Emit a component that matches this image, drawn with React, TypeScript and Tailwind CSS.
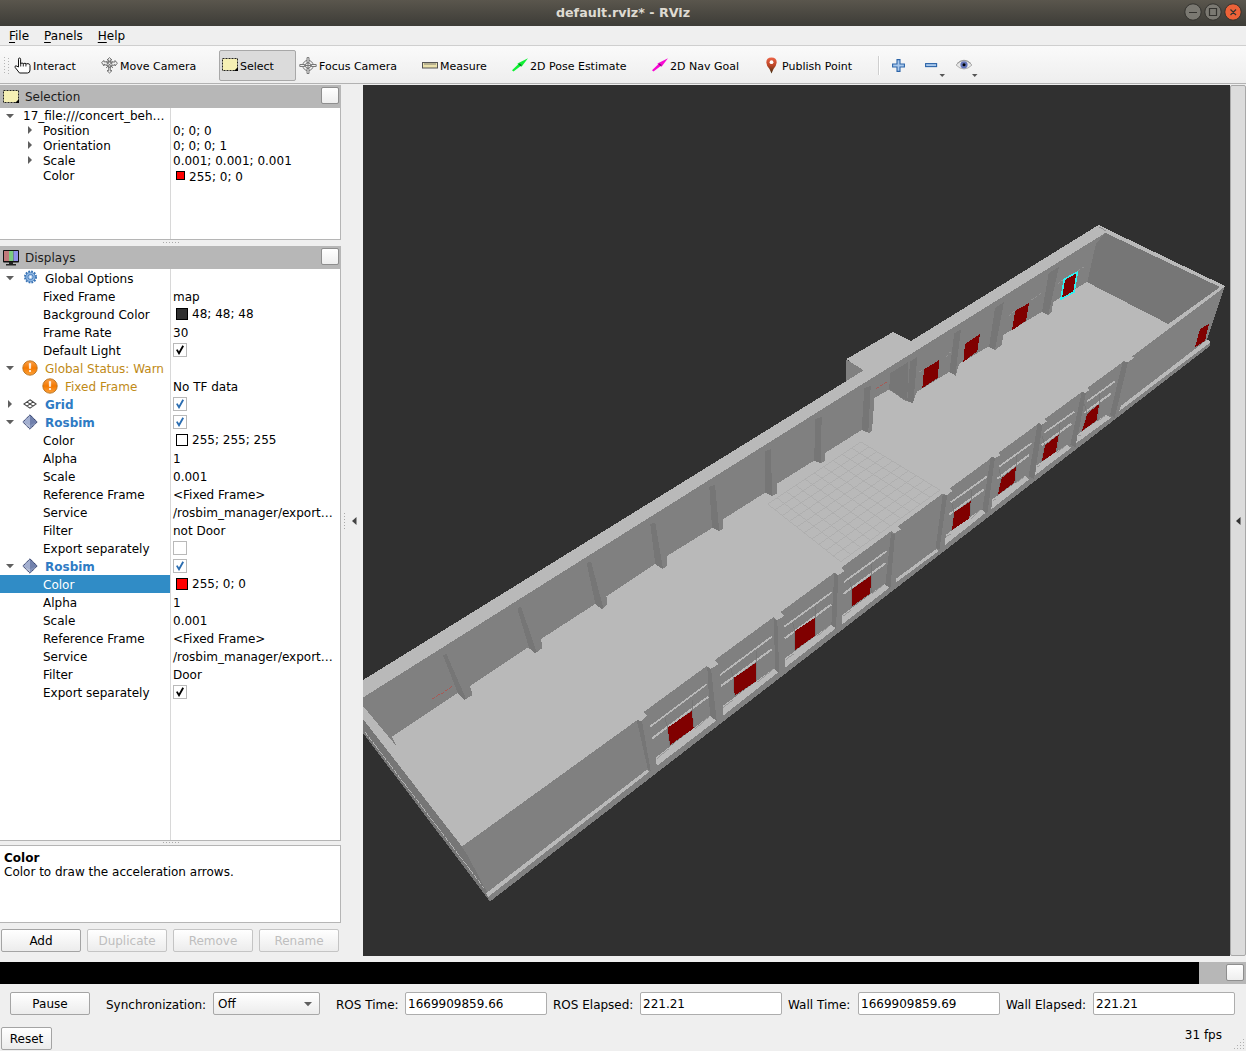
import React from "react";

type Pt = [number, number];

/* ---------- small widgets ---------- */

function Arrow({ dir }: { dir: "down" | "right" | "none" }) {
  if (dir === "none") return null;
  return (
    <svg className="block" width="8" height="8" viewBox="0 0 8 8">
      {dir === "down" ? <path d="M0 2h8L4 6.2z" fill="#5f5f5f" /> : <path d="M2 0v8l4-4z" fill="#5f5f5f" />}
    </svg>
  );
}

function SelectIcon() {
  return (
    <svg className="block shrink-0" width="16" height="16" viewBox="0 0 16 16">
      <rect x=".5" y="1.500" width="15" height="12" fill="#f6f0b4" />
      <rect x=".5" y="1.500" width="15" height="12" fill="none" stroke="#222" strokeDasharray="2 1" />
      <path d="M16 10v4h-4z" fill="#000" />
    </svg>
  );
}

function MonitorIcon() {
  return (
    <svg className="mt-px block shrink-0" width="16" height="17" viewBox="0 0 16 17">
      <rect width="16" height="12.5" rx=".8" fill="#111" />
      <rect x="1" y="1" width="5" height="10" fill="#c07a7a" />
      <rect x="6" y="1" width="4.5" height="10" fill="#7ccb80" />
      <rect x="10.500" y="1" width="4.500" height="10" fill="#9090ea" />
      <path d="M6 12h4v2h3v1.500H3V14h3z" fill="#222" />
    </svg>
  );
}

function GearIcon() {
  return (
    <svg className="block" width="15" height="15" viewBox="0 0 15 15">
      <circle cx="7.500" cy="7" r="5.500" fill="none" stroke="#3570b3" strokeWidth="2" strokeDasharray="1.700 1.180" />
      <circle cx="7.500" cy="7" r="4.800" fill="#8fb6e2" stroke="#3f78b8" strokeWidth=".8" />
      <circle cx="7.500" cy="7" r="2.600" fill="#b8d2f0" stroke="#3570b3" strokeWidth=".8" />
      <circle cx="7.500" cy="7" r="1" fill="#fff" />
    </svg>
  );
}

function WarnIcon() {
  return (
    <svg className="block" width="16" height="16" viewBox="0 0 16 16">
      <defs>
        <linearGradient id="wg" x1="0" y1="0" x2="0" y2="1">
          <stop offset="0" stopColor="#f9a04a" />
          <stop offset=".5" stopColor="#f57900" />
          <stop offset="1" stopColor="#fda23a" />
        </linearGradient>
      </defs>
      <circle cx="8" cy="8" r="7.200" fill="url(#wg)" stroke="#b8701c" strokeWidth=".9" />
      <path d="M7.200 3.500h1.600L8.600 8.500H7.400z" fill="#fff" stroke="#fff" strokeWidth=".5" />
      <circle cx="8" cy="11" r="1.100" fill="#fff" />
    </svg>
  );
}

function GridIcon() {
  return (
    <svg className="block" width="14" height="10" viewBox="0 0 14 10">
      <path d="M7 .8 13.200 5 7 9.200.8 5zM3.900 2.900l6.200 4.200M10.100 2.900 3.900 7.100" fill="none" stroke="#444" strokeWidth="1.100" />
    </svg>
  );
}

function RosbimIcon() {
  return (
    <svg className="block" width="16" height="16" viewBox="0 0 16 16">
      <path d="M8 .8 15.200 8 8 15.200.8 8z" fill="#8090b8" />
      <path d="M8 .8.8 8 8 11z" fill="#a3afd0" />
      <path d="M8 .8 15.200 8 8 11z" fill="#7080ac" />
      <path d="M.8 8 8 15.200V11z" fill="#b4bdd6" />
      <path d="M8 .8 15.200 8 8 15.200.8 8z" fill="none" stroke="#25305a" strokeDasharray="1.300 .7" />
    </svg>
  );
}

function Check({ on, blue }: { on: boolean; blue?: boolean }) {
  return (
    <span className="flex h-[14px] w-[14px] items-center justify-center border border-[#b9b9b9] bg-white">
      {on && (
        <svg width="10" height="10" viewBox="0 0 10 10">
          <path d="M1.800 4.600 4 8.300 8.200.8" fill="none" stroke={blue ? "#2a6cb0" : "#000"} strokeWidth="1.800" />
        </svg>
      )}
    </span>
  );
}

function Swatch({ color, size }: { color: string; size: "sm" | "md" }) {
  return (
    <span
      className={size === "sm" ? "ml-[3px] h-[9px] w-[9px] border border-black" : "ml-[3px] h-3 w-3 border border-black"}
      style={{ backgroundColor: color }}
    />
  );
}

function PushButton({ label, className, disabled }: { label: string; className: string; disabled?: boolean }) {
  return (
    <button
      className={
        "flex h-[23px] items-center justify-center rounded-[2px] border bg-linear-to-b from-white to-[#ececec] leading-none " +
        (disabled ? "border-[#c4c4c4] text-[#bebebe] " : "border-[#a4a4a4] text-black ") +
        className
      }
    >
      {label}
    </button>
  );
}

function FloatButton() {
  return <span className="h-[17px] w-[18px] rounded-[2px] border border-[#8e8e8e] bg-linear-to-b from-white to-[#eee]" />;
}

function PanelHeader({ icon, title }: { icon: React.ReactNode; title: string }) {
  return (
    <div className="flex h-[23px] w-[341px] shrink-0 items-center bg-[#b7b7b7] pr-[2px] pl-[3px]">
      {icon}
      <span className="ml-1.5 flex-1 pt-px text-[#1c1c1c]">{title}</span>
      <span className="-mt-[2px] flex">
        <FloatButton />
      </span>
    </div>
  );
}

function Handle({ className }: { className: string }) {
  return (
    <div className={"flex shrink-0 justify-center " + className}>
      <span className="h-px w-4 bg-[repeating-linear-gradient(90deg,#aaa_0_1px,transparent_1px_3px)]" />
    </div>
  );
}

/* ---------- trees ---------- */

type Row = {
  arrow?: "down" | "right";
  icon?: React.ReactNode;
  label: string;
  indent: 0 | 1 | 2;
  tone?: "bold" | "warn" | "selected";
  value?: React.ReactNode;
};

const text = (s: string) => <span className="pt-[2px]">{s}</span>;
const colour = (c: string, s: string) => (
  <>
    <Swatch color={c} size="md" />
    <span className="-mt-px ml-1">{s}</span>
  </>
);

const displayRows: Row[] = [
  { arrow: "down", icon: <GearIcon />, label: "Global Options", indent: 0 },
  { label: "Fixed Frame", indent: 1, value: text("map") },
  { label: "Background Color", indent: 1, value: colour("#303030", "48; 48; 48") },
  { label: "Frame Rate", indent: 1, value: text("30") },
  { label: "Default Light", indent: 1, value: <Check on /> },
  { arrow: "down", icon: <WarnIcon />, label: "Global Status: Warn", indent: 0, tone: "warn" },
  { icon: <WarnIcon />, label: "Fixed Frame", indent: 2, tone: "warn", value: text("No TF data") },
  { arrow: "right", icon: <GridIcon />, label: "Grid", indent: 0, tone: "bold", value: <Check on blue /> },
  { arrow: "down", icon: <RosbimIcon />, label: "Rosbim", indent: 0, tone: "bold", value: <Check on blue /> },
  { label: "Color", indent: 1, value: colour("#ffffff", "255; 255; 255") },
  { label: "Alpha", indent: 1, value: text("1") },
  { label: "Scale", indent: 1, value: text("0.001") },
  { label: "Reference Frame", indent: 1, value: text("<Fixed Frame>") },
  { label: "Service", indent: 1, value: text("/rosbim_manager/export…") },
  { label: "Filter", indent: 1, value: text("not Door") },
  { label: "Export separately", indent: 1, value: <Check on={false} /> },
  { arrow: "down", icon: <RosbimIcon />, label: "Rosbim", indent: 0, tone: "bold", value: <Check on blue /> },
  { label: "Color", indent: 1, tone: "selected", value: colour("#ff0000", "255; 0; 0") },
  { label: "Alpha", indent: 1, value: text("1") },
  { label: "Scale", indent: 1, value: text("0.001") },
  { label: "Reference Frame", indent: 1, value: text("<Fixed Frame>") },
  { label: "Service", indent: 1, value: text("/rosbim_manager/export…") },
  { label: "Filter", indent: 1, value: text("Door") },
  { label: "Export separately", indent: 1, value: <Check on /> },
];

const tones = {
  bold: "font-bold text-[#2f7bc4]",
  warn: "text-[#c08a16]",
  selected: "text-white",
};

function DisplayRow({ row }: { row: Row }) {
  return (
    <div className="flex h-[18px]">
      <div className={"flex w-[170px] shrink-0 items-center " + (row.tone === "selected" ? "bg-[#308cc6]" : "")}>
        {row.indent === 0 && (
          <span className="ml-1.5 w-2">
            <Arrow dir={row.arrow ?? "none"} />
          </span>
        )}
        {row.icon ? (
          <span className={"flex justify-start " + (row.indent === 2 ? "ml-[42px] w-[23px]" : "w-[31px]")}>
            <span className={"-mt-px flex justify-center " + (row.indent === 2 ? "w-4" : "ml-2 w-4")}>{row.icon}</span>
          </span>
        ) : (
          <span className="w-[43px]" />
        )}
        <span className={"pt-[2px] whitespace-nowrap " + (row.tone ? tones[row.tone] : "")}>{row.label}</span>
      </div>
      <div className="flex flex-1 items-center border-l border-[#d8d8d8] pl-[2px] whitespace-nowrap">{row.value}</div>
    </div>
  );
}

const selectionRows: { arrow: boolean; label: string; value: React.ReactNode }[] = [
  { arrow: true, label: "Position", value: text("0; 0; 0") },
  { arrow: true, label: "Orientation", value: text("0; 0; 0; 1") },
  { arrow: true, label: "Scale", value: text("0.001; 0.001; 0.001") },
  {
    arrow: false,
    label: "Color",
    value: (
      <>
        <Swatch color="#ff0000" size="sm" />
        <span className="mt-1 ml-1">255; 0; 0</span>
      </>
    ),
  },
];

/* ---------- toolbar ---------- */

const handIcon = (
  <svg className="-ml-px block" width="17" height="17" viewBox="0 0 17 17">
    <path
      d="M4.500 10V2.200Q4.500 1 5.500 1T6.600 2.200V6.500L8 6l1.500.6L11 6.200l1.500.7 1.500-.3Q16 7 16 8.500V13Q16 16 13.500 16H5.500L1.200 10.500Q.5 8.800 2 8.800z"
      fill="#fff"
      stroke="#111"
      strokeWidth="1"
    />
    <path d="M6.700 6v3.500M9.300 6.500v3M11.900 6.800v2.700" stroke="#111" strokeWidth=".9" />
  </svg>
);
const moveIcon = (
  <svg className="-ml-px block" width="17" height="17" viewBox="0 0 17 17">
    <g fill="#eee" stroke="#666" strokeWidth=".9">
      <path d="M8.500.6 11 3H9.300v3.500H7.700V3H6zM8.500 16 6 13.600h1.700V10h1.600v3.600H11z" />
      <path d="M.6 5.500 3 3.500v1.300l11 .2V3.500l2.400 2.700L14 9V7.500L9 10 3 7.200V9z" />
      <circle cx="8.500" cy="7.500" r="2.500" />
      <path d="M5 4.500l7 6.500M12 4.500 5 11" />
    </g>
  </svg>
);
const focusIcon = (
  <svg className="block" width="18" height="17" viewBox="0 0 18 17">
    <g fill="none" stroke="#777" strokeWidth="1">
      <circle cx="9" cy="8.500" r="5.200" fill="#f4f4f4" />
      <circle cx="9" cy="8.500" r="2.700" />
      <path d="M8 .6h2v5H8zM8 11.500h2v5H8zM.8 7.500h5v2h-5zM12.200 7.500h5v2h-5z" fill="#eee" />
      <path d="M9 5v7M5.500 8.500h7" />
    </g>
  </svg>
);
const measureIcon = (
  <svg className="block" width="16" height="7" viewBox="0 0 16 7">
    <rect x=".5" y=".5" width="15" height="5.500" fill="#ebe2ac" stroke="#555" />
    <path d="M3 1v2M5 1v2M7 1v2M9 1v2M11 1v2M13 1v2" stroke="#666" strokeWidth=".8" />
  </svg>
);
const arrowIcon = (fill: string, mid: string) => (
  <svg className="block" width="16" height="14" viewBox="0 0 16 14">
    <path d="M0 12.200 6 6.500 5.500 5.500 16 .3 9.500 8.800 8.700 8 1.500 13.500z" fill={fill} />
    <path d="m7 6 2.300 1.700" stroke={mid} strokeWidth="1.500" />
  </svg>
);
const pinIcon = (
  <svg className="block" width="11" height="17" viewBox="0 0 11 17">
    <defs>
      <linearGradient id="pin" x1="0" y1="0" x2="0" y2="1">
        <stop offset="0" stopColor="#ec6447" />
        <stop offset=".5" stopColor="#bb4526" />
        <stop offset="1" stopColor="#3f2d10" />
      </linearGradient>
    </defs>
    <path d="M5.500.5Q10.700.5 10.700 5.500 10.500 8.500 7.500 12L5.500 16.500 3.500 12Q.4 8.500.3 5.500.3.5 5.500.5z" fill="url(#pin)" />
    <circle cx="5.500" cy="5.200" r="1.900" fill="#fff" />
  </svg>
);

const tools: { label: string; icon: React.ReactNode; box: string; iconBox: string; active?: boolean }[] = [
  { label: "Interact", icon: handIcon, box: "w-[87px]", iconBox: "w-[18px]" },
  { label: "Move Camera", icon: moveIcon, box: "w-[117px]", iconBox: "w-[18px]" },
  { label: "Select", icon: <SelectIcon />, box: "w-[77px]", iconBox: "w-[18px]", active: true },
  { label: "Focus Camera", icon: focusIcon, box: "w-[126px] pl-[3px]", iconBox: "w-[20px]" },
  { label: "Measure", icon: measureIcon, box: "w-[90px]", iconBox: "w-[18px]" },
  { label: "2D Pose Estimate", icon: arrowIcon("#0ff034", "#0a7020"), box: "w-[140px]", iconBox: "w-[18px]" },
  { label: "2D Nav Goal", icon: arrowIcon("#f808d4", "#80107a"), box: "w-[114px]", iconBox: "w-[18px]" },
  { label: "Publish Point", icon: pinIcon, box: "w-[112px]", iconBox: "w-[16px]" },
];

function Toolbar() {
  return (
    <div className="flex h-[39px] shrink-0 items-center border-b border-b-[#b2b2b2] border-t border-t-[#cfcfcf] bg-linear-to-b from-[#fafafa] to-[#eee] pt-px text-[11px]">
      <div className="ml-1 grid grid-cols-2 gap-x-[3px] gap-y-px">
        {Array.from({ length: 12 }, (_, i) => (
          <span key={i} className={"h-px w-px bg-[#b5b5b5] " + (i % 2 ? "mt-px" : "")} />
        ))}
      </div>
      <div className="ml-[6px] flex pt-px">
        {tools.map((t) => (
          <div
            key={t.label}
            className={
              "flex h-[31px] shrink-0 items-center pb-px " +
              (t.active ? "rounded-[2px] border border-[#a8a8a8] bg-[#dbdbdb] pl-[2px] " : "") +
              t.box
            }
          >
            <span className={"flex shrink-0 " + t.iconBox}>{t.icon}</span>
            <span className="pt-[3px] whitespace-nowrap">{t.label}</span>
          </div>
        ))}
      </div>
      <div className="h-[19px] w-[2px] border-r border-r-white bg-[#cfcfcf]" />
      <svg className="ml-[12px] block" width="13" height="13" viewBox="0 0 13 13">
        <path d="M5 .6h3V5h4.400v3H8v4.400H5V8H.6V5H5z" fill="#a9c8ec" stroke="#2c64a8" strokeWidth="1.100" />
      </svg>
      <svg className="mt-[9px] ml-[20px] block" width="21" height="22" viewBox="0 0 21 22">
        <rect x=".6" y="4.600" width="11" height="3" fill="#a9c8ec" stroke="#2c64a8" strokeWidth="1.100" />
        <path d="M14.500 15h5.500L17.200 18z" fill="#555" />
      </svg>
      <svg className="mt-[9px] ml-[10px] block" width="24" height="22" viewBox="0 0 24 22">
        <path d="M0 6Q8 -3 16 6 8 14 0 6z" fill="#e8e8e8" stroke="#a9a9a9" strokeWidth=".9" />
        <path d="M1 4.500Q8-2 15 4.500" stroke="#999" fill="none" />
        <circle cx="8" cy="5.800" r="3.600" fill="#6273b8" />
        <circle cx="8" cy="5.800" r="1.500" fill="#000" />
        <path d="M16 15h5.500L18.700 18z" fill="#555" />
      </svg>
    </div>
  );
}

/* ---------- 3D view ---------- */

const LIGHT = "#b9b9b9";
const MID = "#808080";
const DARK = "#767676";
const RED = "#800000";

/* Converts points measured on a 3x scale around an origin to view units. */
const at = (ox: number, oy: number, pts: number[]) => {
  const out: string[] = [];
  for (let i = 0; i < pts.length; i += 2) out.push(`${(ox + pts[i] / 3).toFixed(1)},${(oy + pts[i + 1] / 3).toFixed(1)}`);
  return out.join(" ");
};

type Bay = { o: Pt; upper: number[]; lower: number[]; door: number[]; ledge: number[] };

const L: Pt = [620, 520];
const R: Pt = [900, 320];
const bays: Bay[] = [
  { o: L, upper: [90, 620, 260, 493], lower: [97, 655, 265, 530], door: [143, 623, 215, 573, 221, 625, 150, 675], ledge: [108, 712, 270, 587, 288, 602, 110, 738] },
  { o: L, upper: [300, 465, 455, 350], lower: [303, 498, 455, 388], door: [341, 474, 408, 428, 408, 484, 344, 527], ledge: [308, 558, 462, 445, 473, 458, 309, 587] },
  { o: L, upper: [493, 320, 635, 217], lower: [495, 355, 633, 254], door: [525, 333, 586, 292, 586, 347, 525, 390], ledge: [495, 415, 632, 314, 647, 325, 495, 443] },
  { o: L, upper: [672, 186, 800, 93], lower: [670, 222, 797, 129], door: [696, 207, 753, 167, 751, 220, 696, 259], ledge: [667, 285, 793, 192, 808, 203, 667, 313] },
  { o: R, upper: [152, 547, 260, 470], lower: [147, 584, 252, 508], door: [163, 577, 212, 543, 208, 595, 156, 630], ledge: [137, 645, 243, 568, 257, 578, 135, 675] },
  { o: R, upper: [297, 440, 395, 369], lower: [292, 476, 387, 405], door: [305, 474, 348, 440, 343, 488, 293, 525], ledge: [277, 538, 375, 468, 388, 478, 274, 568] },
  { o: R, upper: [433, 338, 523, 275], lower: [425, 376, 514, 311], door: [435, 376, 476, 344, 468, 395, 425, 425], ledge: [408, 437, 500, 374, 514, 383, 406, 465] },
  { o: R, upper: [562, 244, 645, 184], lower: [553, 279, 634, 220], door: [562, 281, 598, 252, 589, 302, 546, 333], ledge: [533, 343, 618, 284, 633, 293, 528, 370] },
];

const frontColumns: [Pt, number[]][] = [
  [L, [50, 600, 66, 603, 92, 752, 84, 750]],
  [L, [262, 442, 273, 445, 290, 603, 270, 588]],
  [L, [463, 298, 472, 300, 478, 461, 464, 446]],
  [L, [643, 160, 655, 163, 648, 327, 634, 316]],
  [L, [813, 40, 825, 42, 811, 208, 796, 194]],
  [R, [128, 525, 142, 524, 118, 690, 107, 683]],
  [R, [272, 412, 285, 412, 262, 582, 247, 570]],
  [R, [413, 310, 428, 312, 402, 478, 386, 468]],
  [R, [545, 217, 558, 217, 527, 382, 511, 374]],
  [R, [668, 125, 684, 127, 644, 293, 630, 284]],
];

const caps: [Pt, number[]][] = [
  [L, [50, 598, 68, 573, 82, 586, 62, 604]],
  [L, [258, 437, 282, 420, 295, 433, 272, 447]],
  [L, [460, 291, 480, 275, 492, 288, 471, 301]],
  [L, [643, 155, 662, 143, 673, 153, 653, 167]],
  [L, [812, 30, 830, 18, 843, 28, 823, 40]],
  [R, [128, 520, 145, 502, 157, 513, 140, 526]],
  [R, [272, 408, 290, 395, 302, 405, 285, 415]],
  [R, [413, 307, 430, 295, 442, 304, 425, 314]],
  [R, [543, 213, 558, 200, 570, 210, 555, 219]],
  [R, [668, 122, 688, 105, 703, 113, 684, 127]],
];

const backColumns: [Pt, number[]][] = [
  [[360, 580], [249, 226, 259, 221, 318, 356, 312, 360, 295, 343]],
  [[360, 580], [472, 86, 483, 80, 530, 216, 524, 219, 507, 203]],
  [[360, 580], [680, -50, 693, -56, 730, 84, 724, 87, 706, 71]],
  [[600, 380], [151, 433, 166, 427, 189, 566, 166, 553]],
  [[600, 380], [328, 320, 345, 314, 358, 453, 336, 443]],
  [[600, 380], [495, 213, 513, 207, 516, 348, 496, 338]],
  [[600, 380], [645, 118, 665, 110, 662, 250, 643, 242]],
  [[600, 380], [793, 25, 812, 18, 805, 157, 785, 150]],
  [[840, 210], [150, 490, 205, 456, 202, 570, 192, 568, 148, 537]],
  [[840, 210], [210, 455, 232, 440, 220, 580, 202, 572]],
  [[840, 210], [343, 370, 363, 358, 346, 496, 328, 487]],
  [[840, 210], [465, 295, 492, 275, 465, 419, 447, 411]],
  [[840, 210], [626, 190, 657, 170, 625, 314, 606, 306]],
];

const gridCorners: Pt[] = [
  [767.7, 504],
  [861, 442],
  [940, 490],
  [840.7, 561.7],
];

function lerp(a: Pt, b: Pt, t: number): Pt {
  return [a[0] + (b[0] - a[0]) * t, a[1] + (b[1] - a[1]) * t];
}

function FloorGrid() {
  const [a, b, c, d] = gridCorners;
  const lines: [Pt, Pt][] = [];
  for (let i = 0; i <= 10; i++) {
    const t = i / 10;
    lines.push([lerp(a, b, t), lerp(d, c, t)]);
    lines.push([lerp(a, d, t), lerp(b, c, t)]);
  }
  return (
    <g stroke="#acacac" strokeWidth=".8">
      {lines.map(([p, q], i) => (
        <line key={i} x1={p[0]} y1={p[1]} x2={q[0]} y2={q[1]} />
      ))}
    </g>
  );
}

function Scene() {
  return (
    <svg className="block h-[871px] w-[867px] shrink-0 bg-[#303030]" viewBox="363 85 867 871" shapeRendering="crispEdges">
      {/* annex */}
      <polygon points="893,332 912,341.500 863,371 846.500,359" fill={LIGHT} />
      <polygon points="846.500,359.500 864,370.500 846,382" fill={MID} />
      {/* floor and wall tops */}
      <polygon points="363,680 1098.500,225 1225,286 1222,290 1140,360 650,725 463,850 363,720" fill={LIGHT} />
      <path d="M1099 227 1106 231" stroke={MID} strokeWidth=".7" />
      {/* back wall, inner side */}
      <polygon
        fill={MID}
        points="363,697.500 600,548.500 840,398 1105.700,232.700 1110,240 1087,282 1053,302 1052,311 1048,315 1041.700,312 1003,335 1002,345 995,350 988,346.700 959,364 955.700,375.700 949,372 916.700,392 912.700,403 904,400 889,389.500 874.500,398 872,430.500 869,433 861.700,430 825.500,452.700 825,461 821,463 814,460.700 776.700,484 776.500,494 772,496 765,492.700 723.500,519 723,529 719,531 712.700,527.700 667,556 667,566 662.500,569 655,564 606.500,596.500 607,604 602,609 596,603.500 541,639 542.500,648 535.500,653 528,647.500 470,686 472.500,695 464.500,700 457.700,693 392,736.700 396,745.500 363,706"
      />
      {backColumns.map(([o, p], i) => (
        <polygon key={i} points={at(o[0], o[1], p)} fill={DARK} />
      ))}
      {/* end wall */}
      <polygon points={at(840, 210, [797, 69, 1140, 231, 985, 342, 742, 217, 768, 100])} fill={DARK} />
      {/* doors in the back wall */}
      <g fill={RED}>
        <polygon points={at(840, 210, [252, 478, 298, 450, 293, 503, 247, 535])} />
        <polygon points={at(840, 210, [375, 402, 420, 372, 412, 424, 370, 456])} />
        <polygon points={at(840, 210, [526, 302, 567, 279, 558, 332, 516, 361])} />
        <polygon points={at(840, 210, [673, 208, 712, 186, 702, 246, 663, 267])} stroke="#2ff0f0" strokeWidth="1.600" />
      </g>
      <g stroke="#999" strokeWidth=".8" strokeDasharray="3 1.500">
        <path d="M945.500 356l5-4M919 372l4-2.500M1008.500 315l6-4M1031 300l10-6.500M1057.500 283l5-3M1078 271l6-4" />
      </g>
      <g stroke="#b0504a" strokeWidth=".8" strokeDasharray="4 1">
        <path d="M432 699l21-13M876 389l10.500-7" />
      </g>
      <FloorGrid />
      {/* left end wall, outer side */}
      <polygon points="363,719 462,846.500 488,894 490,901.500 363,733" fill={DARK} />
      <path d="M365 732 484 888" stroke="#c4c4c4" strokeWidth=".8" strokeDasharray="5 1" />
      {/* front wall, outer side */}
      <polygon points="461.700,846.700 638,719.500 641,714 1131,356 1134,355 1224.500,287 1207,340 1210.500,341 1210,346 490,901.500 487,893" fill={MID} />
      <polygon points="461.700,846.700 468,856 489,896 486.500,893" fill={DARK} />
      <polygon points={at(360, 580, [378, 940, 862, 568, 868, 575, 385, 950])} fill={LIGHT} />
      <polygon points={at(600, 380, [887, 597, 1010, 506, 1016, 513, 887, 608])} fill={LIGHT} />
      <polygon points={at(900, 320, [662, 258, 920, 60, 930, 62, 930, 68, 658, 273])} fill={LIGHT} />
      {frontColumns.map(([o, p], i) => (
        <polygon key={i} points={at(o[0], o[1], p)} fill={DARK} />
      ))}
      {caps.map(([o, p], i) => (
        <polygon key={i} points={at(o[0], o[1], p)} fill={LIGHT} />
      ))}
      {bays.map((b, i) => {
        const [ox, oy] = b.o;
        const d = b.door;
        const e = b.ledge;
        return (
          <g key={i}>
            <polyline points={at(ox, oy, b.upper)} stroke={LIGHT} strokeWidth="1.700" fill="none" />
            <polyline points={at(ox, oy, b.lower)} stroke={LIGHT} strokeWidth="2" fill="none" />
            <polyline points={at(ox, oy, [d[0] - 8, d[1] - 28, d[0] - 1, d[1], d[6] - 1, d[7] + 4])} stroke="#747474" strokeWidth=".8" fill="none" />
            <polyline points={at(ox, oy, [d[2] + 1, d[3] - 34, d[2] + 1, d[3], d[4] + 2, d[5] + 4])} stroke="#747474" strokeWidth=".8" fill="none" />
            <polygon points={at(ox, oy, e)} fill={LIGHT} />
            <polyline points={at(ox, oy, [d[4] + 4, d[5] + 2, e[2] - 4, e[3] + 4])} stroke="#8c8c8c" strokeWidth=".7" fill="none" />
            <polyline points={at(ox, oy, [e[0] + 2, e[1] + 4, d[6] - 4, d[7] + 12])} stroke="#8c8c8c" strokeWidth=".7" fill="none" />
            <polygon points={at(ox, oy, d)} fill={RED} />
          </g>
        );
      })}
      <polygon points={at(840, 210, [1080, 357, 1107, 341, 1095, 392, 1065, 412])} fill={RED} />
    </svg>
  );
}

/* ---------- page ---------- */

function TimeField({ label, value, labelBox }: { label: string; value: string; labelBox: string }) {
  return (
    <>
      <span className={"shrink-0 pt-[2px] whitespace-nowrap " + labelBox}>{label}</span>
      <span className="flex h-[23px] w-[142px] shrink-0 items-center rounded-[2px] border border-[#adadad] bg-white pl-[2px] leading-none">{value}</span>
    </>
  );
}

export default function App() {
  return (
    <div className="flex h-[1051px] w-[1246px] flex-col overflow-hidden bg-[#efefef] font-['DejaVu_Sans',sans-serif] text-[12px] leading-[14px] text-black">
      <div className="relative flex h-[26px] shrink-0 items-center justify-center bg-linear-to-b from-[#5a564d] to-[#3d3c37]">
        <span className="pb-px text-[12.700px] font-bold text-[#dfdbd2]">default.rviz* - RViz</span>
        <svg className="absolute top-[3px] right-[2px]" width="60" height="18" viewBox="0 0 60 18">
          <g stroke="#33322e">
            <circle cx="9" cy="9" r="8.200" fill="#7b7972" />
            <circle cx="29" cy="9" r="8.200" fill="#7b7972" />
            <circle cx="49" cy="9" r="8.200" fill="#ed6238" />
          </g>
          <path d="M5 9.500h8M25.500 5.500h7v7h-7zM46.500 6.500l5.500 5.500M52 6.500l-5.500 5.500" fill="none" stroke="#34332f" strokeWidth="1.200" />
        </svg>
      </div>

      <div className="flex h-[19px] shrink-0 items-center gap-[15px] pl-[9px]">
        {["File", "Panels", "Help"].map((m) => (
          <span key={m}>
            <span className="underline underline-offset-2">{m[0]}</span>
            {m.slice(1)}
          </span>
        ))}
      </div>

      <Toolbar />

      <div className="flex h-[878px] shrink-0 pt-px">
        <div className="flex w-[341px] shrink-0 flex-col">
          <PanelHeader icon={<SelectIcon />} title="Selection" />
          <div className="flex h-[132px] shrink-0 flex-col border-r border-b border-[#b5b5b5] bg-white leading-[15px]">
            <div className="flex h-[15px]">
              <div className="flex w-[170px] items-center">
                <span className="ml-1.5 w-[17px]">
                  <Arrow dir="down" />
                </span>
                <span className="pt-[2px] whitespace-nowrap">17_file:///concert_beh…</span>
              </div>
              <div className="flex-1 border-l border-[#d8d8d8]" />
            </div>
            {selectionRows.map((r) => (
              <div key={r.label} className="flex h-[15px]">
                <div className="flex w-[170px] items-center">
                  <span className="ml-[26px] w-[17px] pb-px">{r.arrow && <Arrow dir="right" />}</span>
                  <span className="pt-[2px]">{r.label}</span>
                </div>
                <div className="flex flex-1 items-center border-l border-[#d8d8d8] pl-[2px]">{r.value}</div>
              </div>
            ))}
            <div className="ml-[170px] flex-1 border-l border-[#d8d8d8]" />
          </div>
          <Handle className="h-[6px] pt-[2px]" />
          <PanelHeader icon={<MonitorIcon />} title="Displays" />
          <div className="flex h-[572px] shrink-0 flex-col border-r border-b border-[#b5b5b5] bg-white">
            {displayRows.map((r, i) => (
              <DisplayRow key={i} row={r} />
            ))}
            <div className="ml-[170px] flex-1 border-l border-[#d8d8d8]" />
          </div>
          <Handle className="h-[4px] pt-px" />
          <div className="h-[78px] shrink-0 border border-l-0 border-[#b5b5b5] bg-white pt-[5px] pl-1">
            <p className="font-bold">Color</p>
            <p>Color to draw the acceleration arrows.</p>
          </div>
          <div className="flex gap-1.5 pt-1.5 pl-px">
            <PushButton label="Add" className="w-20" />
            <PushButton label="Duplicate" className="w-20" disabled />
            <PushButton label="Remove" className="w-20" disabled />
            <PushButton label="Rename" className="w-20" disabled />
          </div>
        </div>
        <div className="flex h-[871px] w-[22px] shrink-0 items-center justify-between pr-[6px] pl-[3px]">
          <span className="h-4 w-px bg-[repeating-linear-gradient(180deg,#aaa_0_1px,transparent_1px_3px)]" />
          <svg width="5" height="8" viewBox="0 0 5 8">
            <path d="M4.500 0v8L0 4z" fill="#444" />
          </svg>
        </div>
        <div className="flex w-[867px] shrink-0 flex-col">
          <Scene />
        </div>
        <div className="flex h-[871px] w-4 shrink-0 items-center justify-center rounded-[2px] border border-[#a8a8a8] bg-[#dcdcdc]">
          <svg width="5" height="8" viewBox="0 0 5 8">
            <path d="M4.500 0v8L0 4z" fill="#333" />
          </svg>
        </div>
      </div>

      <div className="flex h-[22px] shrink-0 bg-black">
        <div className="ml-auto flex w-[47px] items-center justify-end bg-[#b7b7b7] pr-[2px] pb-px">
          <FloatButton />
        </div>
      </div>

      <div className="mt-2 flex h-[23px] shrink-0 items-center">
        <PushButton label="Pause" className="ml-[10px] w-20 shrink-0" />
        <span className="ml-4 w-[107px] shrink-0 pt-[2px]">Synchronization:</span>
        <span className="flex h-[23px] w-[107px] shrink-0 items-center justify-between rounded-[2px] border border-[#a8a8a8] bg-linear-to-b from-white to-[#ececec] pr-[7px] pl-1 leading-none">
          Off
          <Arrow dir="down" />
        </span>
        <TimeField label="ROS Time:" value="1669909859.66" labelBox="ml-4 w-[69px]" />
        <TimeField label="ROS Elapsed:" value="221.21" labelBox="ml-[6px] w-[87px]" />
        <TimeField label="Wall Time:" value="1669909859.69" labelBox="ml-[6px] w-[70px]" />
        <TimeField label="Wall Elapsed:" value="221.21" labelBox="ml-[6px] w-[87px]" />
      </div>

      <div className="mt-3 flex h-6 shrink-0 justify-between">
        <PushButton label="Reset" className="ml-px w-[51px]" />
        <div className="flex">
          <span className="mt-px mr-[12px]">31 fps</span>
          <svg className="mt-3 mr-px block" width="11" height="11" viewBox="0 0 11 11" fill="#b0b0b0">
            <path d="M9 0h1v1H9zM9 3h1v1H9zM6 3h1v1H6zM9 6h1v1H9zM6 6h1v1H6zM3 6h1v1H3zM9 9h1v1H9zM6 9h1v1H6zM3 9h1v1H3zM0 9h1v1H0z" />
          </svg>
        </div>
      </div>
    </div>
  );
}
